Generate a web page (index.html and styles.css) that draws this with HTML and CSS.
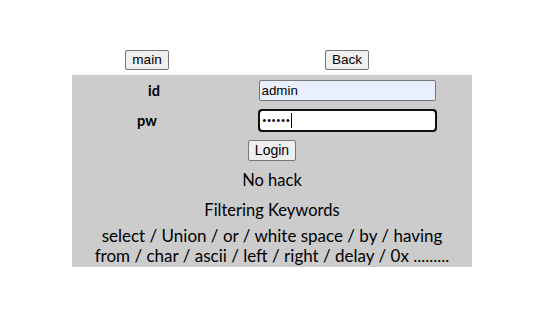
FILE: index.html
```html
<!DOCTYPE html>
<html lang="ko">
<head>
<meta charset="utf-8">
<title>Login</title>
<link rel="stylesheet" href="styles.css">
</head>
<body>
<div class="page">
  <div class="nav">
    <div class="cell"><button class="btn" type="button">main</button></div>
    <div class="cell"><button class="btn" type="button">Back</button></div>
  </div>
  <div class="panel">
    <div class="row">
      <div class="label label-id">id</div>
      <div class="cell"><input class="field autofill" type="text" value="admin"></div>
    </div>
    <div class="row">
      <div class="label">pw</div>
      <div class="cell"><div class="field focused"><span class="dots">••••••</span><span class="caret"></span></div></div>
    </div>
    <div class="row single">
      <button class="btn login" type="button">Login</button>
    </div>
    <div class="msg">No hack</div>
    <div class="msg title">Filtering Keywords</div>
    <div class="keywords">
      <div class="line">select / Union / or / white space / by / having</div>
      <div class="line">from / char / ascii / left / right / delay / 0x .........</div>
    </div>
  </div>
</div>
</body>
</html>
```

FILE: styles.css
```css
html, body {
  margin: 0;
  padding: 0;
  background: #ffffff;
}
body {
  margin: 8px;
  font-family: Lato, "Noto Sans CJK KR", sans-serif;
  color: #000;
}
.page {
  width: 400px;
  margin-left: 64px;
  padding-top: 42px;
}
.nav {
  display: grid;
  grid-template-columns: 150px 250px;
  height: 25px;
  align-items: start;
}
.cell {
  display: flex;
  justify-content: center;
  align-items: center;
}
.btn {
  font-family: "Liberation Sans", Arial, sans-serif;
  font-size: 13.6px;
  line-height: 16px;
  height: 20px;
  padding: 1px 6px;
  background: #efefef;
  border: 1px solid #767676;
  border-radius: 2px;
  color: #000;
  margin: 0;
}
.panel {
  background: #cccccc;
  padding-bottom: 1px;
}
.row {
  display: grid;
  grid-template-columns: 150px 250px;
  height: 30px;
  align-items: center;
}
.row.single {
  display: flex;
  justify-content: center;
}
.label {
  text-align: center;
  font-weight: bold;
  font-size: 14.5px;
}
.label-id {
  padding-left: 14px;
}
.field {
  box-sizing: border-box;
  width: 177px;
  height: 21px;
  margin: 0;
  padding: 1px 2px;
  font-family: "Liberation Sans", Arial, sans-serif;
  font-size: 13.33px;
  border: 1px solid #767676;
  border-radius: 2px;
  background: #fff;
  color: #000;
}
.autofill {
  background: #e8f0fe;
}
.focused {
  display: flex;
  align-items: center;
  border-color: #101010;
  outline: 2px solid #101010;
  outline-offset: -1px;
  border-radius: 3px;
  padding-left: 3px;
}
.dots {
  font-size: 10.5px;
  letter-spacing: 1px;
  line-height: 1;
}
.caret {
  width: 1px;
  height: 15px;
  background: #000;
  margin-left: 0;
}
.login {
  height: 21px;
  font-size: 14px;
}
.msg {
  text-align: center;
  font-size: 16.5px;
  height: 30px;
  line-height: 30px;
}
.title {
  height: 31px;
  line-height: 31px;
}
.keywords {
  text-align: center;
  font-size: 17px;
  line-height: 20px;
}
.line {
  height: 20px;
  white-space: nowrap;
}
```
